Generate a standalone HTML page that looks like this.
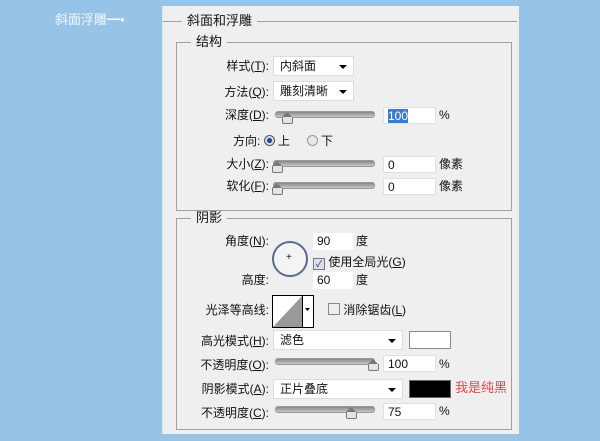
<!DOCTYPE html>
<html><head><meta charset="utf-8"><style>
body{margin:0;width:600px;height:441px;background:#96c3e6;position:relative;overflow:hidden;font-family:"Liberation Sans","Noto Sans CJK SC",sans-serif;font-size:12px;color:#111}
.a{position:absolute;white-space:nowrap;line-height:14px}
#panel{position:absolute;left:162px;top:6px;width:356px;height:428px;background:#efefef;border-left:1px solid #d8e4ee}
.box{position:absolute;border:1px solid #a0a0a0;}
.leg{position:absolute;background:#efefef;padding:0 5px;font-size:13px;line-height:14px}
.in{position:absolute;background:#fff;border:1px solid #e0e0e0;height:17px;line-height:16px;padding-left:4px;box-sizing:border-box}
.sel{position:absolute;background:#fff;border:1px solid #dcdcdc;height:20px;line-height:18px;padding-left:6px;box-sizing:border-box}
.sel:after{content:"";position:absolute;right:6px;top:8px;border:4px solid transparent;border-top:4px solid #000;border-bottom:0}
.tr{position:absolute;height:5px;background:linear-gradient(#888,#c8c8c8);border-radius:3px;border:1px solid #999}
.th{position:absolute;width:9px;height:6px;background:#e4e4e4;border:1px solid #777;border-top:none;border-radius:0 0 2px 2px}
.th:before{content:"";position:absolute;left:-1px;top:-5px;border:5px solid transparent;border-bottom:5px solid #777;border-top:0}
.r{text-align:right}
</style></head><body>
<div class="a" style="left:55px;top:13px;color:#f4f8fc;font-size:13px">斜面浮雕━•</div>
<div id="panel">
<div class="box" style="left:0;top:15px;width:354px;height:0;border-width:1px 0 0 0"></div>
<div class="leg" style="left:19px;top:8px">斜面和浮雕</div>
<div class="box" style="left:13px;top:36px;width:334px;height:167px"></div>
<div class="leg" style="left:28px;top:29px">结构</div>
<div class="a r" style="left:40px;top:53px;width:66px">样式(<u>T</u>):</div>
<div class="sel" style="left:110px;top:50px;width:81px">内斜面</div>
<div class="a r" style="left:40px;top:79px;width:66px">方法(<u>Q</u>):</div>
<div class="sel" style="left:110px;top:75px;width:81px">雕刻清晰</div>
<div class="a r" style="left:40px;top:102px;width:66px">深度(<u>D</u>):</div>
<div class="tr" style="left:112px;top:105px;width:98px"></div><div class="th" style="left:119px;top:111px"></div>
<div class="in" style="left:220px;top:101px;width:53px"><span style="background:#3a7bd5;color:#fff">100</span></div>
<div class="a" style="left:276px;top:102px">%</div>
<div class="a" style="left:70px;top:128px">方向: <span style="display:inline-block;width:9px;height:9px;border-radius:50%;border:1px solid #555;background:radial-gradient(#1e4e8c 35%,#dde 45%);vertical-align:-1px"></span> 上 &nbsp;&nbsp;&nbsp;&nbsp;<span style="display:inline-block;width:9px;height:9px;border-radius:50%;border:1px solid #999;background:#e8e8e8;vertical-align:-1px"></span> 下</div>
<div class="a r" style="left:40px;top:151px;width:66px">大小(<u>Z</u>):</div>
<div class="tr" style="left:110px;top:154px;width:100px"></div><div class="th" style="left:109px;top:160px"></div>
<div class="in" style="left:220px;top:150px;width:53px">0</div>
<div class="a" style="left:276px;top:151px">像素</div>
<div class="a r" style="left:40px;top:173px;width:66px">软化(<u>F</u>):</div>
<div class="tr" style="left:110px;top:176px;width:100px"></div><div class="th" style="left:109px;top:182px"></div>
<div class="in" style="left:220px;top:172px;width:53px">0</div>
<div class="a" style="left:276px;top:173px">像素</div>

<div class="box" style="left:13px;top:212px;width:334px;height:210px"></div>
<div class="leg" style="left:28px;top:205px">阴影</div>
<div class="a r" style="left:40px;top:228px;width:66px">角度(<u>N</u>):</div>
<div style="position:absolute;left:109px;top:235px;width:32px;height:32px;border:2px solid #5a6a90;border-radius:50%;background:#f4f4f4"></div>
<div class="a" style="left:123px;top:245px;font-size:10px">+</div>
<div class="in" style="left:150px;top:227px;width:40px;border:none">90</div>
<div class="a" style="left:193px;top:228px">度</div>
<div class="a" style="left:150px;top:249px"><span style="display:inline-block;width:10px;height:10px;border:1px solid #777;background:#dde;vertical-align:-1px;font-size:9px;line-height:10px;text-align:center;color:#235">✓</span> 使用全局光(<u>G</u>)</div>
<div class="a r" style="left:40px;top:267px;width:66px">高度:</div>
<div class="in" style="left:150px;top:266px;width:40px;border:none">60</div>
<div class="a" style="left:193px;top:267px">度</div>
<div class="a r" style="left:20px;top:297px;width:86px">光泽等高线:</div>
<svg style="position:absolute;left:109px;top:289px" width="42" height="33"><rect x="0.5" y="0.5" width="41" height="32" fill="#fff" stroke="#000"/><polygon points="1,32 30,1 30,32" fill="#999"/><line x1="30.5" y1="0" x2="30.5" y2="33" stroke="#000"/><polygon points="33,13 38,13 35.5,16" fill="#000"/></svg>
<div class="a" style="left:165px;top:297px"><span style="display:inline-block;width:10px;height:10px;border:1px solid #888;background:#eee;vertical-align:-1px"></span> 消除锯齿(<u>L</u>)</div>
<div class="a r" style="left:10px;top:328px;width:96px">高光模式(<u>H</u>):</div>
<div class="sel" style="left:110px;top:324px;width:130px">滤色</div>
<div style="position:absolute;left:246px;top:325px;width:40px;height:16px;background:#fff;border:1px solid #888"></div>
<div class="a r" style="left:10px;top:352px;width:96px">不透明度(<u>O</u>):</div>
<div class="tr" style="left:112px;top:352px;width:98px"></div><div class="th" style="left:205px;top:358px"></div>
<div class="in" style="left:220px;top:349px;width:53px">100</div>
<div class="a" style="left:276px;top:351px">%</div>
<div class="a r" style="left:10px;top:376px;width:96px">阴影模式(<u>A</u>):</div>
<div class="sel" style="left:110px;top:373px;width:130px">正片叠底</div>
<div style="position:absolute;left:246px;top:374px;width:40px;height:16px;background:#000;border:1px solid #666"></div>
<div class="a" style="left:292px;top:375px;color:#e04848;font-size:13px">我是纯黑</div>
<div class="a r" style="left:10px;top:400px;width:96px">不透明度(<u>C</u>):</div>
<div class="tr" style="left:112px;top:400px;width:98px"></div><div class="th" style="left:183px;top:406px"></div>
<div class="in" style="left:220px;top:397px;width:53px">75</div>
<div class="a" style="left:276px;top:398px">%</div>
</div>
</body></html>
